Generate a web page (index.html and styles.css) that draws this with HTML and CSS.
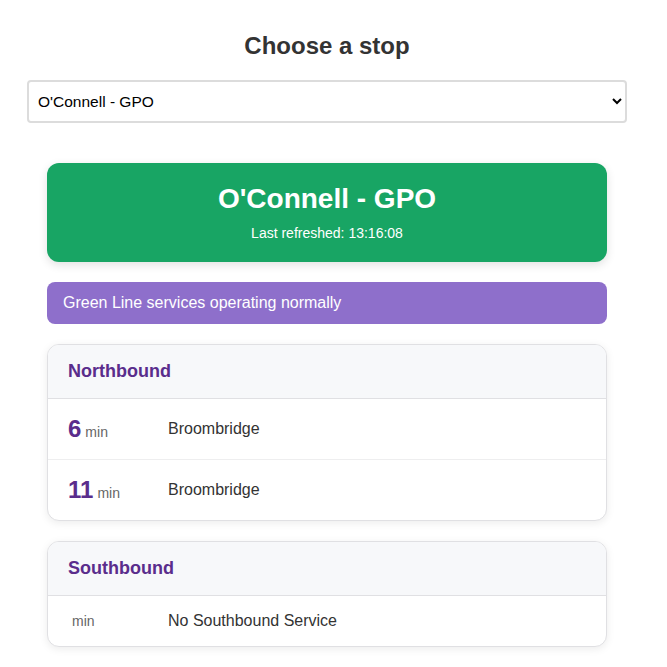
FILE: index.html
```html
<!DOCTYPE html>
<html lang="en">
<head>
<meta charset="utf-8">
<title>Luas stop</title>
<link rel="stylesheet" href="styles.css">
</head>
<body>
<div class="page">
  <h1 class="title">Choose a stop</h1>
  <select class="stop-select">
    <option>O'Connell - GPO</option>
  </select>
  <div class="content">
    <div class="stop-card">
      <h2 class="stop-name">O'Connell - GPO</h2>
      <div class="refreshed">Last refreshed: 13:16:08</div>
    </div>
    <div class="status">Green Line services operating normally</div>
    <div class="direction">
      <div class="dir-head">Northbound</div>
      <div class="tram">
        <div class="due"><span class="num">6</span><span class="unit">min</span></div>
        <div class="dest">Broombridge</div>
      </div>
      <div class="tram">
        <div class="due"><span class="num">11</span><span class="unit">min</span></div>
        <div class="dest">Broombridge</div>
      </div>
    </div>
    <div class="direction">
      <div class="dir-head">Southbound</div>
      <div class="tram">
        <div class="due"><span class="num"></span><span class="unit">min</span></div>
        <div class="dest">No Southbound Service</div>
      </div>
    </div>
  </div>
</div>
</body>
</html>
```
FILE: styles.css
```css
* { box-sizing: border-box; }
html, body { margin: 0; padding: 0; background: #fff; }
body {
  font-family: "Liberation Sans", Arial, sans-serif;
  color: #333;
}
.page {
  width: 600px;
  margin: 0 0 0 27px;
  padding-top: 31px;
  padding-bottom: 20px;
}
.title {
  margin: 0 0 19px;
  text-align: center;
  font-size: 24px;
  line-height: 30px;
  font-weight: bold;
  color: #333;
}
.stop-select {
  display: block;
  width: 600px;
  height: 43px;
  padding: 0 6px 0 5px;
  font-family: "Liberation Sans", Arial, sans-serif;
  font-size: 15.5px;
  color: #000;
  background: #fff;
  border: 2px solid #dcdcdc;
  border-radius: 4px;
}
.content {
  padding: 40px 20px 0;
  display: flex;
  flex-direction: column;
  gap: 20px;
}
.stop-card {
  background: #18a564;
  color: #fff;
  border-radius: 12px;
  text-align: center;
  padding: 19px 20px 21px;
  box-shadow: 0 3px 10px rgba(0,0,0,0.12);
}
.stop-name {
  margin: 0;
  font-size: 28px;
  line-height: 34px;
  font-weight: bold;
}
.refreshed {
  margin-top: 9px;
  font-size: 14px;
  line-height: 16px;
}
.status {
  background: #8e6fcb;
  color: #fff;
  border-radius: 8px;
  padding: 11px 16px 12px;
  font-size: 16px;
  line-height: 19px;
}
.direction {
  border: 1px solid #e0e0e3;
  border-radius: 12px;
  overflow: hidden;
  background: #fff;
  box-shadow: 0 2px 8px rgba(0,0,0,0.08);
}
.dir-head {
  background: #f7f8fa;
  border-bottom: 1px solid #e0e0e3;
  padding: 16px 20px;
  font-size: 18px;
  line-height: 21px;
  font-weight: bold;
  color: #5a2d8c;
}
.tram {
  display: flex;
  align-items: center;
  padding: 16px 20px;
  border-bottom: 1px solid #eeeeef;
  min-height: 50px;
}
.tram:last-child { border-bottom: none; }
.due {
  width: 100px;
  flex: none;
  display: flex;
  align-items: baseline;
}
.num {
  font-size: 24px;
  line-height: 28px;
  font-weight: bold;
  color: #5a2d8c;
}
.unit {
  margin-left: 4px;
  font-size: 14px;
  color: #666;
}
.dest {
  font-size: 16px;
  line-height: 18px;
  color: #333;
}
```
